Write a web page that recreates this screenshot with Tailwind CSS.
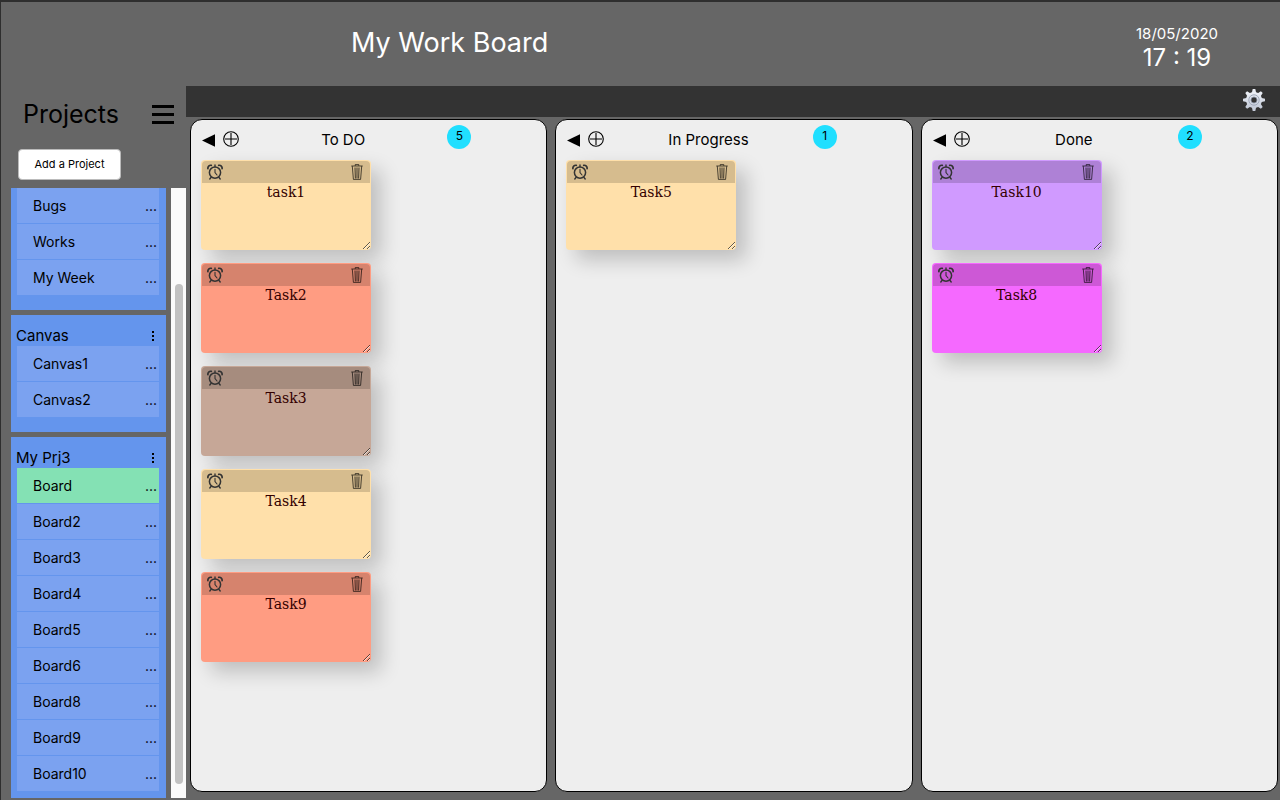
<!DOCTYPE html>
<html lang="en">

<head>
  <meta charset="UTF-8" />
  <meta name="viewport" content="width=device-width, initial-scale=1.0" />
  <title>My Work Board</title>
  <script src="https://cdn.jsdelivr.net/npm/@tailwindcss/browser@4"></script>
</head>

<body class="h-screen overflow-hidden flex flex-col bg-[#666666] border-l border-t-2 border-[#2e2e2e] font-['Inter','Liberation_Sans',sans-serif] text-black">

  <!-- Shared icons -->
  <svg class="hidden">
    <symbol id="clock" viewBox="0 0 16 16">
      <g fill="none" stroke="currentColor" stroke-linecap="round">
        <circle cx="8" cy="8.6" r="5.6" stroke-width="1.5" />
        <path d="M8 5.2V8.6L10 11" stroke-width="1.1" />
        <path d="M.9 4.6C.6 2.5 2.2 1 4.3 1.3M15.1 4.6C15.4 2.5 13.8 1 11.7 1.3" stroke-width="1.7" />
        <path d="M4.2 13.2L2.8 15M11.8 13.2L13.2 15M8 1V2.6" stroke-width="1.4" />
      </g>
    </symbol>
    <symbol id="trash" viewBox="0 0 12 16">
      <g fill="none" stroke="currentColor">
        <path d="M.3 2H11.7M4.2 1.8V.6H7.8V1.8" stroke-width="1" />
        <path d="M1.3 2.2L2.4 15.4H9.6L10.7 2.2" stroke-width="1" />
        <path d="M4 3.5L4.4 14.4M6 3.5V14.4M8 3.5L7.6 14.4" stroke-width="1.1" />
      </g>
    </symbol>
    <symbol id="plus" viewBox="0 0 16 16">
      <g fill="none" stroke="currentColor" stroke-width="1.1">
        <circle cx="8" cy="8" r="7.3" />
        <path d="M8 2V14M2 8H14" />
      </g>
    </symbol>
    <symbol id="arrow" viewBox="0 0 13 13">
      <path d="M0 6.5L13 .2V12.8Z" fill="currentColor" />
    </symbol>
  </svg>

  <header class="h-[84px] shrink-0 flex justify-between items-center pl-[350px] pr-[62px] text-white">
    <h1 class="pb-[3px] text-[27px] leading-8">My Work Board</h1>
    <div class="pt-2 text-center">
      <p class="text-[15px] leading-5">18/05/2020</p>
      <p class="text-2xl leading-7">17 : 19</p>
    </div>
  </header>

  <div class="flex flex-1 min-h-0">
    <aside class="w-[185px] shrink-0 flex flex-col pb-[2px]">
      <div class="flex justify-between items-center h-14 pl-[22px] pr-3">
        <h2 class="text-[25px] leading-8">Projects</h2>
        <button aria-label="Menu" class="flex flex-col gap-[5px] w-[22px]">
          <span class="h-[3px] w-full bg-black"></span>
          <span class="h-[3px] w-full bg-black"></span>
          <span class="h-[3px] w-full bg-black"></span>
        </button>
      </div>
      <div class="h-[46px] pl-[17px] pt-[7px]">
        <button class="w-[103px] h-[31px] bg-white border border-[#bbbbbb] rounded text-[11px]">Add a Project</button>
      </div>

      <div class="flex flex-1 min-h-0 justify-between">
        <div id="projects" class="w-[155px] ml-[10px] flex flex-col gap-[5px] overflow-hidden"></div>
        <div class="w-[15px] bg-[#fafafa] flex justify-center">
          <div class="w-2 h-[500px] mt-24 rounded-full bg-[#c1c1c1]"></div>
        </div>
      </div>
    </aside>

    <main class="flex-1 min-w-0 flex flex-col">
      <div class="h-[31px] bg-[#333333] flex justify-end items-center pr-[15px] pb-[3px]">
        <button aria-label="Settings">
          <svg class="size-[22px]" viewBox="0 0 22 22">
            <defs>
              <linearGradient id="metal" x1="0" y1="0" x2="0" y2="1">
                <stop offset="0" stop-color="#eef1f7" />
                <stop offset="1" stop-color="#c3cad8" />
              </linearGradient>
            </defs>
            <g fill="url(#metal)">
              <path d="M9.7 0H12.3L13.3 4.5H8.7ZM9.7 22H12.3L13.3 17.5H8.7ZM0 9.7V12.3L4.5 13.3V8.7ZM22 9.7V12.3L17.5 13.3V8.7Z" />
              <path d="M2.3 4.1L4.1 2.3L8 4.8L4.8 8ZM19.7 4.1L17.9 2.3L14 4.8L17.2 8ZM2.3 17.9L4.1 19.7L8 17.2L4.8 14ZM19.7 17.9L17.9 19.7L14 17.2L17.2 14Z" />
              <circle cx="11" cy="11" r="8" />
            </g>
            <circle cx="11" cy="11" r="5.2" fill="none" stroke="#9aa3b5" stroke-width=".9" />
            <circle cx="11" cy="11" r="3" fill="#333333" stroke="#8a93a5" stroke-width=".8" />
          </svg>
        </button>
      </div>
      <div id="board" class="flex flex-1 min-h-0 gap-2 pt-[2px] pr-[2px] pb-2 pl-1"></div>
    </main>
  </div>

  <script>
    const projects = [
      { boards: ['Bugs', 'Works', 'My Week'] },
      { name: 'Canvas', boards: ['Canvas1', 'Canvas2'] },
      { name: 'My Prj3', boards: ['Board', 'Board2', 'Board3', 'Board4', 'Board5', 'Board6', 'Board8', 'Board9', 'Board10'], active: 'Board' }
    ];

    const yellow = 'bg-[#ffe0aa]';
    const salmon = 'bg-[#ff9c82]';
    const columns = [
      { title: 'To DO', tasks: [['task1', yellow], ['Task2', salmon], ['Task3', 'bg-[#c6a797]'], ['Task4', yellow], ['Task9', salmon]] },
      { title: 'In Progress', tasks: [['Task5', yellow]] },
      { title: 'Done', tasks: [['Task10', 'bg-[#d09aff]'], ['Task8', 'bg-[#f569ff]']] }
    ];

    document.getElementById('projects').innerHTML = projects.map(project => `
      <section class="shrink-0 bg-[#6495ed] pl-[6px] pr-[7px] pb-[14px]">
        ${project.name ? `
        <div class="h-[31px] flex justify-between items-end -ml-px pr-[5px]">
          <h3 class="text-[15px] leading-5">${project.name}</h3>
          <button aria-label="Project menu" class="flex flex-col gap-[2px] pb-[5px]">
            <span class="size-[2px] bg-black"></span>
            <span class="size-[2px] bg-black"></span>
            <span class="size-[2px] bg-black"></span>
          </button>
        </div>` : ''}
        <ul>
          ${project.boards.map(board => `
          <li class="h-9 flex justify-between items-center pl-4 pr-[2px] border-b border-[#6495ed] text-sm ${board === project.active ? 'bg-[#84e1b4]' : 'bg-[#7ba2f0]'}">
            <a href="#">${board}</a>
            <button aria-label="Board menu">...</button>
          </li>`).join('')}
        </ul>
      </section>`).join('');

    document.getElementById('board').innerHTML = columns.map(column => `
      <section class="flex-1 min-w-0 bg-[#eeeeee] border border-black rounded-xl px-[10px]">
        <div class="h-10 flex items-center pr-[65px]">
          <button aria-label="Move left" class="ml-px"><svg class="size-[13px]"><use href="#arrow" /></svg></button>
          <button aria-label="Add task" class="ml-2 pb-[3px]"><svg class="size-4"><use href="#plus" /></svg></button>
          <h3 class="flex-1 text-center text-[15px]">${column.title}</h3>
          <span class="size-6 mb-[6px] rounded-full bg-[#20dfff] text-xs leading-[22px] text-center">${column.tasks.length}</span>
        </div>
        <div class="flex flex-col gap-[13px]">
          ${column.tasks.map(([name, color]) => `
          <article class="w-[170px] h-[90px] flex flex-col pt-px rounded shadow-[10px_10px_20px_rgba(0,0,0,0.2)] ${color}">
            <div class="h-[22px] mx-px flex justify-between items-center pl-[5px] pr-[7px] bg-black/16 rounded-t-sm text-[#333333]">
              <button aria-label="Set reminder"><svg class="size-4"><use href="#clock" /></svg></button>
              <button aria-label="Delete task"><svg class="w-3 h-4 text-black/65"><use href="#trash" /></svg></button>
            </div>
            <textarea aria-label="Task" class="flex-1 min-h-0 w-full resize outline-none text-center text-[#330000] font-['DejaVu_Serif',serif] text-sm leading-[18px]">${name}</textarea>
          </article>`).join('')}
        </div>
      </section>`).join('');
  </script>
</body>

</html>
